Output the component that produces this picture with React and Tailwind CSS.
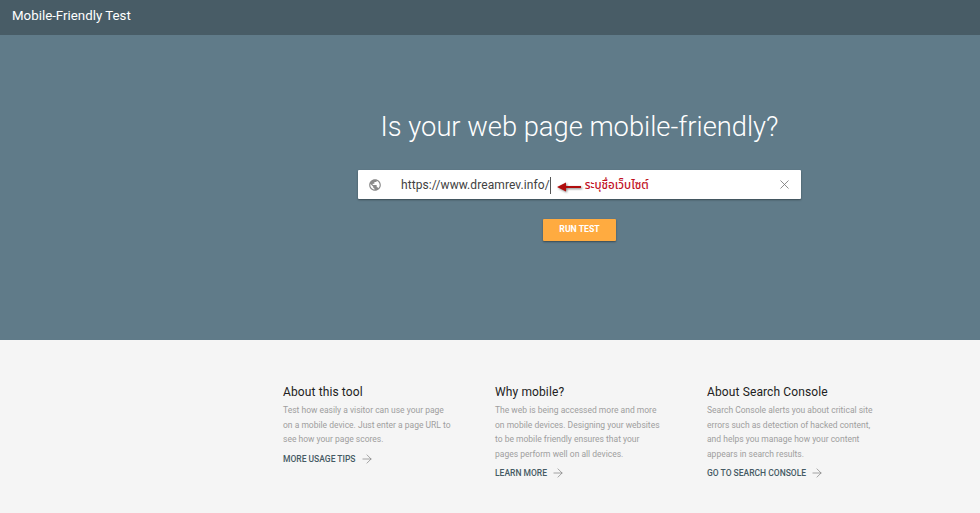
import { X, ArrowRight } from 'lucide-react'

const columns = [
  {
    title: 'About this tool',
    body: ['Test how easily a visitor can use your page', 'on a mobile device. Just enter a page URL to', 'see how your page scores.'],
    link: 'MORE USAGE TIPS',
  },
  {
    title: 'Why mobile?',
    body: ['The web is being accessed more and more', 'on mobile devices. Designing your websites', 'to be mobile friendly ensures that your', 'pages perform well on all devices.'],
    link: 'LEARN MORE',
  },
  {
    title: 'About Search Console',
    body: ['Search Console alerts you about critical site', 'errors such as detection of hacked content,', 'and helps you manage how your content', 'appears in search results.'],
    link: 'GO TO SEARCH CONSOLE',
  },
]

function InfoColumn({ title, body, link }) {
  return (
    <div className="w-[212px]">
      <h2 className="text-[12px] leading-[16px] font-normal tracking-[0.12px] text-[#212121]">{title}</h2>
      <p className="mt-[3px] text-[8.5px] leading-[14.6px] text-[#9e9e9e]">
        {body.map((line) => (
          <span key={line} className="block whitespace-nowrap">{line}</span>
        ))}
      </p>
      <a className="mt-[5px] flex items-center gap-[4px] text-[8.5px] leading-[14px] font-medium text-[#455a64]">
        {link}
        <ArrowRight size={14} strokeWidth={1.1} className="text-[#757575]" />
      </a>
    </div>
  )
}

export default function App() {
  return (
    <div className="h-[513px] w-[980px] overflow-hidden bg-[#f5f5f5] font-['Roboto',sans-serif]">
      <header className="flex h-[35px] items-center bg-[#485c66] pb-[4px] pl-3">
        <span className="text-[13.3px] font-normal text-white">Mobile-Friendly Test</span>
      </header>
      <section className="h-[305px] bg-[#607b89] pt-[72px] pl-[358px]">
        <div className="flex w-[443px] flex-col items-center">
          <h1 className="text-[27.3px] leading-[40px] font-light whitespace-nowrap text-white">
            Is your web page mobile-friendly?
          </h1>
          <div className="relative mt-[23px] flex h-[29px] w-full items-center rounded-[1px] bg-white pr-[9px] pl-[10px] shadow-[0_1px_2px_rgba(0,0,0,0.4)]">
            <svg width="14" height="14" viewBox="0 0 24 24" fill="#8a8a8a">
              <path d="M12 2C6.48 2 2 6.48 2 12s4.48 10 10 10 10-4.48 10-10S17.52 2 12 2zm-1 17.93c-3.95-.49-7-3.85-7-7.93 0-.62.08-1.21.21-1.79L9 15v1c0 1.1.9 2 2 2v1.93zm6.9-2.54c-.26-.81-1-1.39-1.9-1.39h-1v-3c0-.55-.45-1-1-1H8v-2h2c.55 0 1-.45 1-1V7h2c1.1 0 2-.9 2-2v-.41c2.93 1.19 5 4.06 5 7.41 0 2.08-.8 3.97-2.1 5.39z" />
            </svg>
            <span className="mt-[2px] ml-[19px] border-r border-[#555] text-[12px] leading-[17px] tracking-[0.08px] text-[#424242]">
              https://www.dreamrev.info/
            </span>
            <svg width="26" height="12" viewBox="0 0 26 12" className="mt-[4px] ml-[6px] drop-shadow-[1px_1px_1px_rgba(0,0,0,0.5)]">
              <path d="M0 6 L9 1.5 L9 5 L24 5 L24 7 L9 7 L9 10.5 Z" fill="#b00d0d" />
            </svg>
            <span className="mt-[2px] ml-[2px] font-['Noto_Sans_Thai','Noto_Sans','Noto_Sans_CJK_SC',sans-serif] text-[11.6px] leading-[16px] font-medium text-[#c1121f]">
              ระบุชื่อเว็บไซต์
            </span>
            <X size={15} strokeWidth={1.3} className="ml-auto text-[#757575]" />
          </div>
          <button className="mt-[20px] h-[22px] w-[73px] rounded-[1px] bg-[#ffab40] text-[8.7px] font-bold text-white shadow-[0_1px_2px_rgba(0,0,0,0.4)]">
            RUN TEST
          </button>
        </div>
      </section>
      <section className="flex pt-[44px] pl-[283px]">
        {columns.map((c) => (
          <InfoColumn key={c.title} {...c} />
        ))}
      </section>
    </div>
  )
}
